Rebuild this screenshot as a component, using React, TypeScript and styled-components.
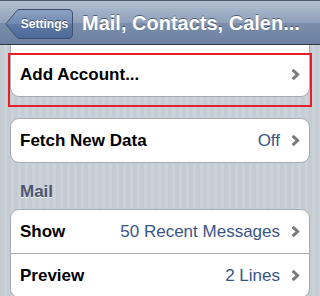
import React from "react";
import styled, { createGlobalStyle } from "styled-components";

const Global = createGlobalStyle`
  html, body { margin: 0; padding: 0; }
  body {
    width: 320px;
    height: 296px;
    overflow: hidden;
    font-family: "Liberation Sans", Arial, Helvetica, sans-serif;
    -webkit-font-smoothing: antialiased;
  }
`;

const Screen = styled.div`
  width: 320px;
  height: 296px;
  display: flex;
  flex-direction: column;
  overflow: hidden;
  background: repeating-linear-gradient(
    90deg,
    #c5ccd4 0px,
    #c5ccd4 4px,
    #cbd2d8 4px,
    #cbd2d8 7px
  );
`;

const NavBar = styled.header`
  height: 43px;
  flex: 0 0 auto;
  display: flex;
  align-items: center;
  gap: 9px;
  padding: 0 5px;
  border-top: 1px solid #4f5b6c;
  border-bottom: 1px solid #2d3642;
  background: linear-gradient(#b4c0d1 0%, #8e9fb9 50%, #7b8fac 51%, #6b80a0 100%);
  position: relative;
  z-index: 2;
`;

const BackButton = styled.button`
  position: relative;
  flex: 0 0 auto;
  width: 68px;
  height: 30px;
  margin-top: 3px;
  padding: 0 0 0 11px;
  border: 0;
  background: none;
  display: flex;
  align-items: center;
  justify-content: center;
`;

const BackShape = styled.svg`
  position: absolute;
  left: 0;
  top: 0;
`;

const BackLabel = styled.span`
  position: relative;
  font-family: "Liberation Sans", Arial, sans-serif;
  font-weight: bold;
  font-size: 12px;
  color: #fff;
  text-shadow: 0 -1px 0 rgba(0, 0, 0, 0.45);
`;

const Title = styled.h1`
  margin: 0;
  margin-top: 2px;
  flex: 1 1 auto;
  min-width: 0;
  font-size: 20px;
  font-weight: bold;
  color: #fff;
  white-space: nowrap;
  overflow: hidden;
  text-shadow: 0 -1px 0 rgba(0, 0, 0, 0.45);
`;

const Content = styled.main`
  flex: 1 1 auto;
  display: flex;
  flex-direction: column;
  padding: 0 10px;
`;

const Highlighted = styled.div`
  position: relative;
`;

const Highlight = styled.div`
  position: absolute;
  left: -2px;
  right: -2px;
  top: 8px;
  bottom: -10px;
  border: 2px solid #e3202a;
  pointer-events: none;
`;

const Group = styled.section<{ $clippedTop?: boolean; $gap?: number }>`
  margin-top: ${(p) => p.$gap ?? 0}px;
  background: #fff;
  border: 1px solid #a8acb2;
  border-top: ${(p) => (p.$clippedTop ? "0" : "1px solid #a8acb2")};
  border-radius: ${(p) => (p.$clippedTop ? "0 0 9px 9px" : "9px")};
  padding-top: ${(p) => (p.$clippedTop ? 8 : 0)}px;
  overflow: hidden;
`;

const Row = styled.div`
  height: 43px;
  display: flex;
  align-items: center;
  padding: 0 9px 0 9px;
  & + & {
    border-top: 1px solid #acacac;
  }
`;

const Label = styled.span`
  flex: 1 1 auto;
  font-size: 17px;
  font-weight: bold;
  color: #000;
  white-space: nowrap;
`;

const Value = styled.span`
  font-size: 17px;
  color: #385487;
  margin-right: 11px;
  white-space: nowrap;
`;

const Chevron = styled.svg`
  flex: 0 0 auto;
`;

const SectionHeader = styled.h2`
  margin: 0;
  padding: 19px 0 0 10px;
  height: 27px;
  font-size: 17px;
  font-weight: bold;
  color: #4c566c;
  text-shadow: 0 1px 0 rgba(255, 255, 255, 0.8);
`;

const Arrow = () => (
  <Chevron width="9" height="13" viewBox="0 0 9 13">
    <path d="M1.6 1.8 L6.6 6.5 L1.6 11.2" fill="none" stroke="#7a7a7a" strokeWidth="3" strokeLinejoin="miter" />
  </Chevron>
);

const Item = ({ label, value }: { label: string; value?: string }) => (
  <Row>
    <Label>{label}</Label>
    {value && <Value>{value}</Value>}
    <Arrow />
  </Row>
);

export default function App() {
  return (
    <>
      <Global />
      <Screen>
        <NavBar>
          <BackButton>
            <BackShape width="68" height="30" viewBox="0 0 68 30">
              <defs>
                <linearGradient id="bb" x1="0" y1="0" x2="0" y2="1">
                  <stop offset="0" stopColor="#8da3c3" />
                  <stop offset="0.5" stopColor="#6f89b0" />
                  <stop offset="0.51" stopColor="#5e7aa5" />
                  <stop offset="1" stopColor="#4b6a98" />
                </linearGradient>
              </defs>
              <path
                d="M0.8 15 L11.5 2 Q12.8 0.5 15 0.5 H63 Q67.5 0.5 67.5 5 V25 Q67.5 29.5 63 29.5 H15 Q12.8 29.5 11.5 28 Z"
                fill="url(#bb)"
                stroke="#3d5070"
                strokeWidth="1"
              />
            </BackShape>
            <BackLabel>Settings</BackLabel>
          </BackButton>
          <Title>Mail, Contacts, Calen...</Title>
        </NavBar>
        <Content>
          <Highlighted>
            <Group $clippedTop>
              <Item label="Add Account..." />
            </Group>
            <Highlight />
          </Highlighted>
          <Group $gap={21}>
            <Item label="Fetch New Data" value="Off" />
          </Group>
          <SectionHeader>Mail</SectionHeader>
          <Group>
            <Item label="Show" value="50 Recent Messages" />
            <Item label="Preview" value="2 Lines" />
          </Group>
        </Content>
      </Screen>
    </>
  );
}
